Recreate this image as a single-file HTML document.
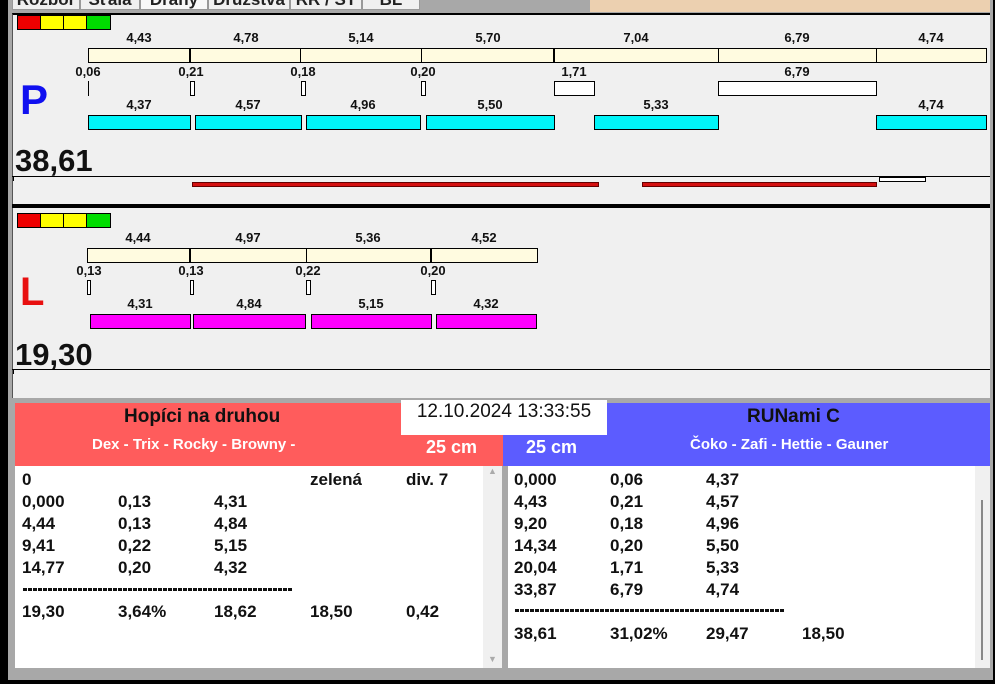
<!DOCTYPE html>
<html><head><meta charset="utf-8"><style>
*{margin:0;padding:0;box-sizing:border-box}
body{width:995px;height:684px;overflow:hidden;background:#000;font-family:"Liberation Sans",sans-serif;position:relative}
div{position:absolute}
.t{font-weight:bold;font-size:13px;color:#111;white-space:nowrap;transform:translateX(-50%)}
.y{background:#fffbe0;border:1px solid #000;height:15px}
.c{background:#00f4f8;border:1px solid #000;height:15px}
.m{background:#ff00ff;border:1px solid #000;height:15px}
.w{background:#fff;border:1px solid #000;height:15px}
.d{background:#000;width:2px;height:15px}
.r{background:#d41010;border:1px solid #600;height:5px}
.tab{top:-9px;height:19px;background:#f0f0f0;border:1px solid #999;font-weight:bold;font-size:17px;color:#222;text-align:center;overflow:hidden;line-height:16px}
.row{font-weight:bold;font-size:17px;color:#111;white-space:nowrap}
.dash{height:3px;background:repeating-linear-gradient(90deg,#111 0 4px,transparent 4px 5px)}
</style></head><body>
<div style="left:8px;top:0;width:985px;height:680px;background:#a8a8a8"></div>
<div style="left:420px;top:0;width:170px;height:12px;background:#a8a8a8"></div>
<div style="left:590px;top:0;width:400px;height:12px;background:#ecd0b0"></div>
<div class="tab" style="left:12px;width:68px">Rozbor</div>
<div class="tab" style="left:80px;width:60px">Sťala</div>
<div class="tab" style="left:140px;width:68px;background:#f8f8f8">Dráhy</div>
<div class="tab" style="left:208px;width:82px">Družstva</div>
<div class="tab" style="left:290px;width:72px">RR / ST</div>
<div class="tab" style="left:362px;width:58px">BL</div>
<!-- P panel -->
<div style="left:12px;top:13px;width:978px;height:192px;background:#f0f0f0;border-top:2px solid #000;border-left:1px solid #555"></div>
<div style="left:17px;top:15px;width:94px;height:15px;border:1px solid #000;background:linear-gradient(90deg,#e00 0 24%,#000 24% 25%,#ff0 25% 49%,#000 49% 50%,#ff0 50% 74%,#000 74% 75%,#0d0 75%)"></div>
<div class="y" style="left:88px;top:48px;width:899px"></div>
<div class="d" style="left:189px;top:48px"></div><div class="d" style="left:300px;top:48px;width:1px"></div><div class="d" style="left:421px;top:48px;width:1px"></div><div class="d" style="left:553px;top:48px"></div><div class="d" style="left:718px;top:48px;width:1px"></div><div class="d" style="left:876px;top:48px;width:1px"></div>
<div class="t" style="left:139px;top:30px">4,43</div><div class="t" style="left:246px;top:30px">4,78</div><div class="t" style="left:361px;top:30px">5,14</div><div class="t" style="left:488px;top:30px">5,70</div><div class="t" style="left:636px;top:30px">7,04</div><div class="t" style="left:797px;top:30px">6,79</div><div class="t" style="left:931px;top:30px">4,74</div>
<div class="t" style="left:88px;top:64px">0,06</div><div class="t" style="left:191px;top:64px">0,21</div><div class="t" style="left:303px;top:64px">0,18</div><div class="t" style="left:423px;top:64px">0,20</div><div class="t" style="left:574px;top:64px">1,71</div><div class="t" style="left:797px;top:64px">6,79</div>
<div class="d" style="left:88px;top:81px;width:1px"></div><div class="w" style="left:190px;top:81px;width:5px"></div><div class="w" style="left:301px;top:81px;width:5px"></div><div class="w" style="left:421px;top:81px;width:5px"></div><div class="w" style="left:554px;top:81px;width:41px"></div><div class="w" style="left:718px;top:81px;width:159px"></div>
<div class="t" style="left:139px;top:97px">4,37</div><div class="t" style="left:248px;top:97px">4,57</div><div class="t" style="left:363px;top:97px">4,96</div><div class="t" style="left:490px;top:97px">5,50</div><div class="t" style="left:656px;top:97px">5,33</div><div class="t" style="left:931px;top:97px">4,74</div>
<div class="c" style="left:88px;top:115px;width:103px"></div><div class="c" style="left:195px;top:115px;width:107px"></div><div class="c" style="left:306px;top:115px;width:115px"></div><div class="c" style="left:426px;top:115px;width:129px"></div><div class="c" style="left:594px;top:115px;width:125px"></div><div class="c" style="left:876px;top:115px;width:111px"></div>
<div style="left:20px;top:76px;font-weight:bold;font-size:42px;color:#1010f0">P</div>
<div style="left:15px;top:143px;font-weight:bold;font-size:31px;color:#111">38,61</div>
<div style="left:12px;top:176px;width:978px;height:1px;background:#000"></div>
<div style="left:13px;top:177px;width:1px;height:4px;background:#000"></div>
<div class="r" style="left:192px;top:182px;width:407px"></div><div class="r" style="left:642px;top:182px;width:235px"></div>
<div style="left:879px;top:177px;width:47px;height:5px;background:#fff;border:1px solid #000"></div>
<div style="left:12px;top:204px;width:978px;height:4px;background:#000"></div>
<!-- L panel -->
<div style="left:12px;top:208px;width:978px;height:190px;background:#f0f0f0;border-left:1px solid #555"></div>
<div style="left:17px;top:213px;width:94px;height:15px;border:1px solid #000;background:linear-gradient(90deg,#e00 0 24%,#000 24% 25%,#ff0 25% 49%,#000 49% 50%,#ff0 50% 74%,#000 74% 75%,#0d0 75%)"></div>
<div class="y" style="left:87px;top:248px;width:451px"></div>
<div class="d" style="left:189px;top:248px"></div><div class="d" style="left:306px;top:248px;width:1px"></div><div class="d" style="left:430px;top:248px"></div>
<div class="t" style="left:138px;top:230px">4,44</div><div class="t" style="left:248px;top:230px">4,97</div><div class="t" style="left:368px;top:230px">5,36</div><div class="t" style="left:484px;top:230px">4,52</div>
<div class="t" style="left:89px;top:263px">0,13</div><div class="t" style="left:191px;top:263px">0,13</div><div class="t" style="left:308px;top:263px">0,22</div><div class="t" style="left:433px;top:263px">0,20</div>
<div class="w" style="left:87px;top:280px;width:4px"></div><div class="w" style="left:190px;top:280px;width:4px"></div><div class="w" style="left:306px;top:280px;width:5px"></div><div class="w" style="left:431px;top:280px;width:5px"></div>
<div class="t" style="left:140px;top:296px">4,31</div><div class="t" style="left:249px;top:296px">4,84</div><div class="t" style="left:371px;top:296px">5,15</div><div class="t" style="left:486px;top:296px">4,32</div>
<div class="m" style="left:90px;top:314px;width:101px"></div><div class="m" style="left:193px;top:314px;width:113px"></div><div class="m" style="left:311px;top:314px;width:121px"></div><div class="m" style="left:436px;top:314px;width:101px"></div>
<div style="left:20px;top:270px;font-weight:bold;font-size:40px;color:#e81010">L</div>
<div style="left:15px;top:337px;font-weight:bold;font-size:31px;color:#111">19,30</div>
<div style="left:12px;top:369px;width:978px;height:1px;background:#000"></div>
<div style="left:13px;top:370px;width:1px;height:4px;background:#000"></div>
<!-- bottom -->
<div style="left:15px;top:403px;width:488px;height:63px;background:#ff5c5c"></div>
<div style="left:503px;top:403px;width:487px;height:63px;background:#5c5cff"></div>
<div style="left:401px;top:400px;width:206px;height:35px;background:#fff;font-size:19px;color:#111;text-align:center;line-height:24px">12.10.2024 13:33:55</div>
<div style="left:124px;top:406px;font-weight:bold;font-size:19px;color:#111">Hopíci na druhou</div>
<div style="left:92px;top:436px;font-weight:bold;font-size:15px;color:#fff">Dex - Trix - Rocky - Browny -</div>
<div style="left:426px;top:437px;font-weight:bold;font-size:18px;color:#fff">25 cm</div>
<div style="left:526px;top:437px;font-weight:bold;font-size:18px;color:#fff">25 cm</div>
<div style="left:747px;top:406px;font-weight:bold;font-size:19px;color:#111">RUNami C</div>
<div style="left:690px;top:436px;font-weight:bold;font-size:15px;color:#fff">Čoko - Zafi - Hettie - Gauner</div>
<div style="left:15px;top:466px;width:468px;height:202px;background:#fff"></div>
<div style="left:483px;top:466px;width:19px;height:202px;background:#f0f0f0;color:#aaa;font-size:9px;text-align:center">▲<div style="top:188px;left:5px">▼</div></div>
<div style="left:508px;top:466px;width:467px;height:202px;background:#fff"></div>
<div style="left:975px;top:466px;width:15px;height:202px;background:#f0f0f0"></div>
<div style="left:981px;top:500px;width:2px;height:160px;background:#888"></div>
<div class="row" style="left:22px;top:470px">0</div><div class="row" style="left:310px;top:470px">zelená</div><div class="row" style="left:406px;top:470px">div. 7</div>
<div class="row" style="left:22px;top:492px">0,000</div><div class="row" style="left:118px;top:492px">0,13</div><div class="row" style="left:214px;top:492px">4,31</div>
<div class="row" style="left:22px;top:514px">4,44</div><div class="row" style="left:118px;top:514px">0,13</div><div class="row" style="left:214px;top:514px">4,84</div>
<div class="row" style="left:22px;top:536px">9,41</div><div class="row" style="left:118px;top:536px">0,22</div><div class="row" style="left:214px;top:536px">5,15</div>
<div class="row" style="left:22px;top:558px">14,77</div><div class="row" style="left:118px;top:558px">0,20</div><div class="row" style="left:214px;top:558px">4,32</div>
<div class="dash" style="left:23px;top:588px;width:270px"></div>
<div class="row" style="left:22px;top:602px">19,30</div><div class="row" style="left:118px;top:602px">3,64%</div><div class="row" style="left:214px;top:602px">18,62</div><div class="row" style="left:310px;top:602px">18,50</div><div class="row" style="left:406px;top:602px">0,42</div>
<div class="row" style="left:514px;top:470px">0,000</div><div class="row" style="left:610px;top:470px">0,06</div><div class="row" style="left:706px;top:470px">4,37</div>
<div class="row" style="left:514px;top:492px">4,43</div><div class="row" style="left:610px;top:492px">0,21</div><div class="row" style="left:706px;top:492px">4,57</div>
<div class="row" style="left:514px;top:514px">9,20</div><div class="row" style="left:610px;top:514px">0,18</div><div class="row" style="left:706px;top:514px">4,96</div>
<div class="row" style="left:514px;top:536px">14,34</div><div class="row" style="left:610px;top:536px">0,20</div><div class="row" style="left:706px;top:536px">5,50</div>
<div class="row" style="left:514px;top:558px">20,04</div><div class="row" style="left:610px;top:558px">1,71</div><div class="row" style="left:706px;top:558px">5,33</div>
<div class="row" style="left:514px;top:580px">33,87</div><div class="row" style="left:610px;top:580px">6,79</div><div class="row" style="left:706px;top:580px">4,74</div>
<div class="dash" style="left:515px;top:609px;width:270px"></div>
<div class="row" style="left:514px;top:624px">38,61</div><div class="row" style="left:610px;top:624px">31,02%</div><div class="row" style="left:706px;top:624px">29,47</div><div class="row" style="left:802px;top:624px">18,50</div>
</body></html>
